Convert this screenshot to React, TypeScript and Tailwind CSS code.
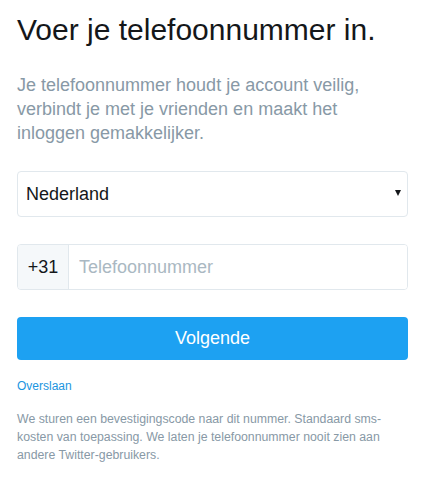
import { useState } from "react";

export default function App() {
	const [country, setCountry] = useState("Nederland")
	const [phone, setPhone] = useState("")

	return (
		<div className="w-[424px] h-[487px] bg-white px-[17px] pt-[13px] font-['Liberation_Sans',Arial,sans-serif]">
			<h1 className="text-[30px] leading-[34px] text-[#14171a]">Voer je telefoonnummer in.</h1>
			<p className="mt-[26px] text-[18px] leading-[24px] text-[#8899a6]">
				Je telefoonnummer houdt je account veilig, verbindt je met je vrienden en maakt het inloggen gemakkelijker.
			</p>

			<div className="relative mt-[26px] h-[46px] w-[391px]">
				<select
					value={country}
					onChange={(event) => setCountry(event.target.value)}
					className="h-full w-full appearance-none rounded border border-[#e1e8ed] bg-white pl-[8px] text-[18px] text-[#14171a] outline-none"
				>
					<option>Nederland</option>
					<option>België</option>
					<option>Duitsland</option>
				</select>
				<span className="pointer-events-none absolute right-[7px] top-[19px] h-0 w-0 border-x-[3.5px] border-t-[6px] border-x-transparent border-t-[#14171a]" />
			</div>

			<div className="mt-[27px] flex h-[46px] w-[391px] overflow-hidden rounded border border-[#e1e8ed]">
				<span className="flex w-[51px] items-center justify-center border-r border-[#e1e8ed] bg-[#f5f8fa] text-[18px] text-[#14171a]">+31</span>
				<input
					value={phone}
					onChange={(event) => setPhone(event.target.value)}
					placeholder="Telefoonnummer"
					className="flex-1 bg-white px-[10px] text-[18px] text-[#14171a] outline-none placeholder:text-[#aab8c2]"
				/>
			</div>

			<button className="mt-[27px] h-[43px] w-[391px] rounded bg-[#1da1f2] text-[18px] text-white">Volgende</button>

			<a href="#" className="mt-[17px] block text-[12px] leading-[18px] text-[#1b95e0]">Overslaan</a>

			<p className="mt-[15px] text-[12.3px] leading-[18px] text-[#8899a6]">
				We sturen een bevestigingscode naar dit nummer. Standaard sms-kosten van toepassing. We laten je telefoonnummer nooit zien aan andere Twitter-gebruikers.
			</p>
		</div>
	)
}
